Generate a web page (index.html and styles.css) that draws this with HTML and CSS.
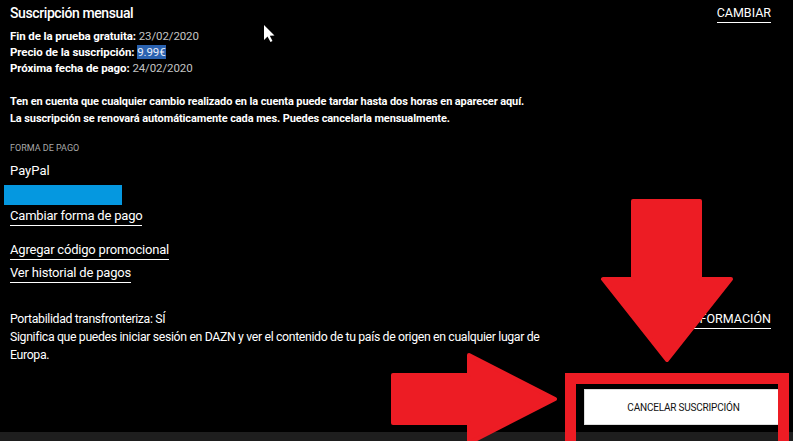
FILE: index.html
```html
<!DOCTYPE html>
<html lang="es">
<head>
<meta charset="utf-8">
<title>Suscripción</title>
<link rel="stylesheet" href="styles.css">
</head>
<body>
<div class="page">
  <main class="content">
    <section class="summary">
      <div class="head">
        <h2 class="title">Suscripción mensual</h2>
        <a class="link caps">CAMBIAR</a>
      </div>
      <p class="row"><b>Fin de la prueba gratuita:</b> <span class="val">23/02/2020</span></p>
      <p class="row"><b>Precio de la suscripción:</b> <span class="val sel">9.99€</span></p>
      <p class="row"><b>Próxima fecha de pago:</b> <span class="val">24/02/2020</span></p>
    </section>
    <p class="note">Ten en cuenta que cualquier cambio realizado en la cuenta puede tardar hasta dos horas en aparecer aquí.<br>La suscripción se renovará automáticamente cada mes. Puedes cancelarla mensualmente.</p>
    <section class="payment">
      <div class="label">FORMA DE PAGO</div>
      <div class="method">PayPal</div>
      <div class="bar"></div>
      <a class="link">Cambiar forma de pago</a>
    </section>
    <section class="links">
      <a class="link">Agregar código promocional</a>
      <a class="link">Ver historial de pagos</a>
    </section>
    <section class="port">
      <div class="port-text">
        <p>Portabilidad transfronteriza: SÍ</p>
        <p>Significa que puedes iniciar sesión en DAZN y ver el contenido de tu país de origen en cualquier lugar de Europa.</p>
      </div>
      <a class="link caps more">MÁS INFORMACIÓN</a>
    </section>
    <div class="actions">
      <button class="cancel">CANCELAR SUSCRIPCIÓN</button>
    </div>
  </main>
  <div class="footer"></div>
  <svg class="overlay" width="793" height="441" viewBox="0 0 793 441">
    <g fill="#ed1c24" stroke="#ed1c24" stroke-width="4" stroke-linejoin="round">
      <polygon points="633,201 700,201 700,279 731,279 667,360 603,279 633,279"/>
      <polygon points="393,375 469,375 469,355 555,399 469,443 469,423 393,423"/>
    </g>
    <path d="M570.5 449 V378.5 H783.5 V449" fill="none" stroke="#ed1c24" stroke-width="11"/>
    <path d="M264 25 L264 40 L267.5 36.5 L270.5 42 L272.5 41 L269.8 35.7 L274.5 35.5 Z" fill="#fff"/>
  </svg>
</div>
</body>
</html>
```

FILE: styles.css
```css
html, body {
  margin: 0;
  padding: 0;
  background: #000;
}
.page {
  position: relative;
  width: 793px;
  height: 441px;
  overflow: hidden;
  background: #000;
  color: #fff;
  font-family: Roboto, "Liberation Sans", sans-serif;
}
.content {
  padding: 0 22px 0 10px;
  display: flex;
  flex-direction: column;
}
p { margin: 0; }
.link {
  color: #fff;
  text-decoration: none;
  border-bottom: 1px solid #fff;
  align-self: flex-start;
}
.summary {
  display: flex;
  flex-direction: column;
  padding-top: 4px;
}
.head {
  display: flex;
  justify-content: space-between;
  align-items: flex-start;
  height: 24px;
}
.title {
  margin: 0;
  font-size: 14px;
  font-weight: 500;
  line-height: 18px;
  letter-spacing: -0.4px;
}
.caps {
  font-size: 12.5px;
  line-height: 16px;
  padding-bottom: 1px;
  margin-top: 1px;
}
.row {
  font-size: 11.5px;
  line-height: 16px;
  letter-spacing: -0.1px;
}
.row b { font-weight: 700; }
.val { color: #c4c4c4; font-weight: 400; }
.sel { background: #2a62b0; color: #e8eef8; }
.note {
  margin-top: 17px;
  font-size: 11px;
  font-weight: 700;
  line-height: 17px;
  letter-spacing: -0.1px;
}
.payment {
  display: flex;
  flex-direction: column;
  margin-top: 15px;
}
.label {
  font-size: 9px;
  color: #a8a8a8;
  line-height: 12px;
}
.method {
  margin-top: 9px;
  font-size: 13px;
  line-height: 16px;
}
.bar {
  margin: 6px 0 0 -6px;
  width: 118px;
  height: 20px;
  background: #0598e0;
}
.payment .link, .links .link {
  font-size: 13px;
  line-height: 15px;
  padding-bottom: 2px;
  letter-spacing: -0.2px;
}
.payment .link { margin-top: 3px; }
.links {
  display: flex;
  flex-direction: column;
  gap: 5px;
  margin-top: 16px;
}
.port {
  display: flex;
  justify-content: space-between;
  align-items: flex-start;
  margin-top: 27px;
}
.port-text {
  width: 560px;
  font-size: 12.3px;
  line-height: 18px;
  letter-spacing: -0.35px;
}
.more {
  margin-top: 1px;
}
.actions {
  display: flex;
  justify-content: flex-end;
  margin-top: 25px;
  margin-right: -12px;
}
.cancel {
  width: 199px;
  height: 36px;
  background: #fff;
  border: 1px solid #ddd;
  color: #111;
  font-family: Roboto, "Liberation Sans", sans-serif;
  font-size: 10px;
  letter-spacing: -0.2px;
  cursor: pointer;
}
.footer {
  position: absolute;
  left: 0;
  right: 0;
  bottom: 0;
  height: 9px;
  background: #1e1e1e;
}
.overlay {
  position: absolute;
  left: 0;
  top: 0;
}
```
